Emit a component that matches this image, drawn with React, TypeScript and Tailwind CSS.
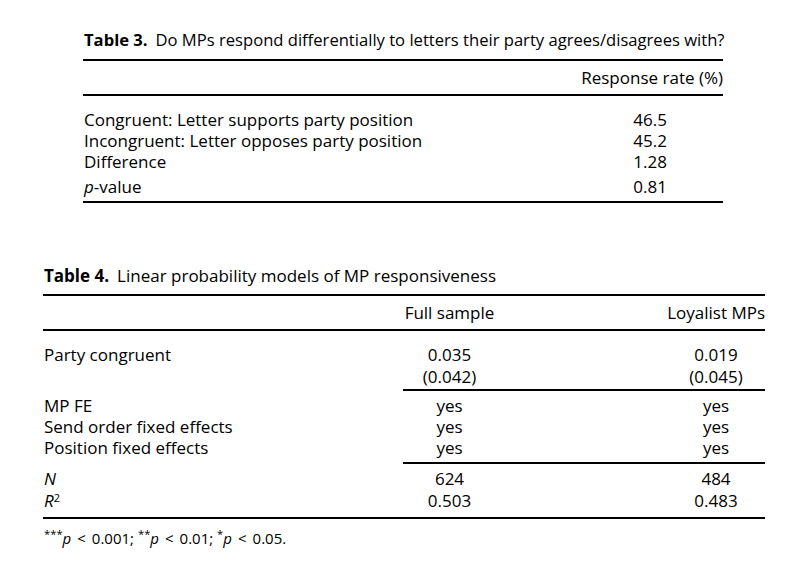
const FONT = { fontFamily: '"Open Sans", "Noto Sans", sans-serif' };

function Rule({ className = "" }: { className?: string }) {
  return <div className={`h-[2px] bg-black ${className}`} />;
}

function Table3() {
  const rows = [
    { label: "Congruent: Letter supports party position", value: "46.5" },
    { label: "Incongruent: Letter opposes party position", value: "45.2" },
    { label: "Difference", value: "1.28" },
  ];
  return (
    <section className="ml-[83px] w-[640px] pt-[29px]">
      <div className="h-[22px] whitespace-nowrap pl-px text-[16.6px] leading-[22px]">
        <span className="font-bold">Table 3.</span>
        <span className="ml-[8px]">Do MPs respond differentially to letters their party agrees/disagrees with?</span>
      </div>
      <Rule className="mt-[8px]" />
      <div className="flex h-[33px] items-center justify-end text-[17px] leading-[33px]">Response rate (%)</div>
      <Rule />
      <div className="pt-[13px] text-[17px]">
        {rows.map((r) => (
          <div key={r.label} className="flex h-[21px] leading-[21px]">
            <div className="flex-1 pl-px">{r.label}</div>
            <div className="w-[200px] pr-[56px] text-right">{r.value}</div>
          </div>
        ))}
        <div className="mt-[4px] flex h-[21px] leading-[21px]">
          <div className="flex-1 pl-px">
            <i>p</i>-value
          </div>
          <div className="w-[200px] pr-[56px] text-right">0.81</div>
        </div>
      </div>
      <Rule className="mt-[4px]" />
    </section>
  );
}

function Row4({ label, a, b, h = "h-[21px] leading-[21px]" }: { label: React.ReactNode; a: string; b: string; h?: string }) {
  return (
    <div className={`grid grid-cols-[360px_93px_171px_98px] ${h}`}>
      <div className="pl-px">{label}</div>
      <div className="text-center">{a}</div>
      <div />
      <div className="text-center">{b}</div>
    </div>
  );
}

function Lt() {
  return <span className="mx-[6px]">&lt;</span>;
}

function Table4() {
  return (
    <section className="ml-[43px] mt-[62px] w-[722px]">
      <div className="h-[22px] whitespace-nowrap pl-px text-[17px] leading-[22px]">
        <span className="font-bold">Table 4.</span>
        <span className="ml-[8px]">Linear probability models of MP responsiveness</span>
      </div>
      <Rule className="mt-[7px]" />
      <div className="grid h-[33px] grid-cols-[360px_93px_171px_98px] items-center text-[17px] leading-[33px]">
        <div />
        <div className="text-center">Full sample</div>
        <div />
        <div className="text-right">Loyalist MPs</div>
      </div>
      <Rule />
      <div className="pt-[13px] text-[17px]">
        <Row4 label="Party congruent" a="0.035" b="0.019" h="h-[22px] leading-[22px]" />
        <Row4 label="" a="(0.042)" b="(0.045)" h="h-[22px] leading-[22px]" />
      </div>
      <Rule className="ml-[360px] mt-px" />
      <div className="pt-[4px] text-[17px]">
        <Row4 label="MP FE" a="yes" b="yes" />
        <Row4 label="Send order fixed effects" a="yes" b="yes" />
        <Row4 label="Position fixed effects" a="yes" b="yes" />
      </div>
      <Rule className="ml-[360px] mt-[4px]" />
      <div className="pt-[4px] text-[17px]">
        <Row4 label={<i>N</i>} a="624" b="484" h="h-[22px] leading-[22px]" />
        <Row4
          label={
            <>
              <i>R</i>
              <sup className="text-[11px]">2</sup>
            </>
          }
          a="0.503"
          b="0.483"
          h="h-[22px] leading-[22px]"
        />
      </div>
      <Rule className="mt-[5px]" />
      <div className="mt-[10px] h-[18px] whitespace-nowrap pl-px text-[15px] leading-[18px]">
        <sup>***</sup>
        <i>p</i>
        <Lt />
        0.001; <sup>**</sup>
        <i>p</i>
        <Lt />
        0.01; <sup>*</sup>
        <i>p</i>
        <Lt />
        0.05.
      </div>
    </section>
  );
}

export default function App() {
  return (
    <div className="h-[562px] w-[809px] overflow-hidden bg-white font-medium text-black" style={FONT}>
      <Table3 />
      <Table4 />
    </div>
  );
}
